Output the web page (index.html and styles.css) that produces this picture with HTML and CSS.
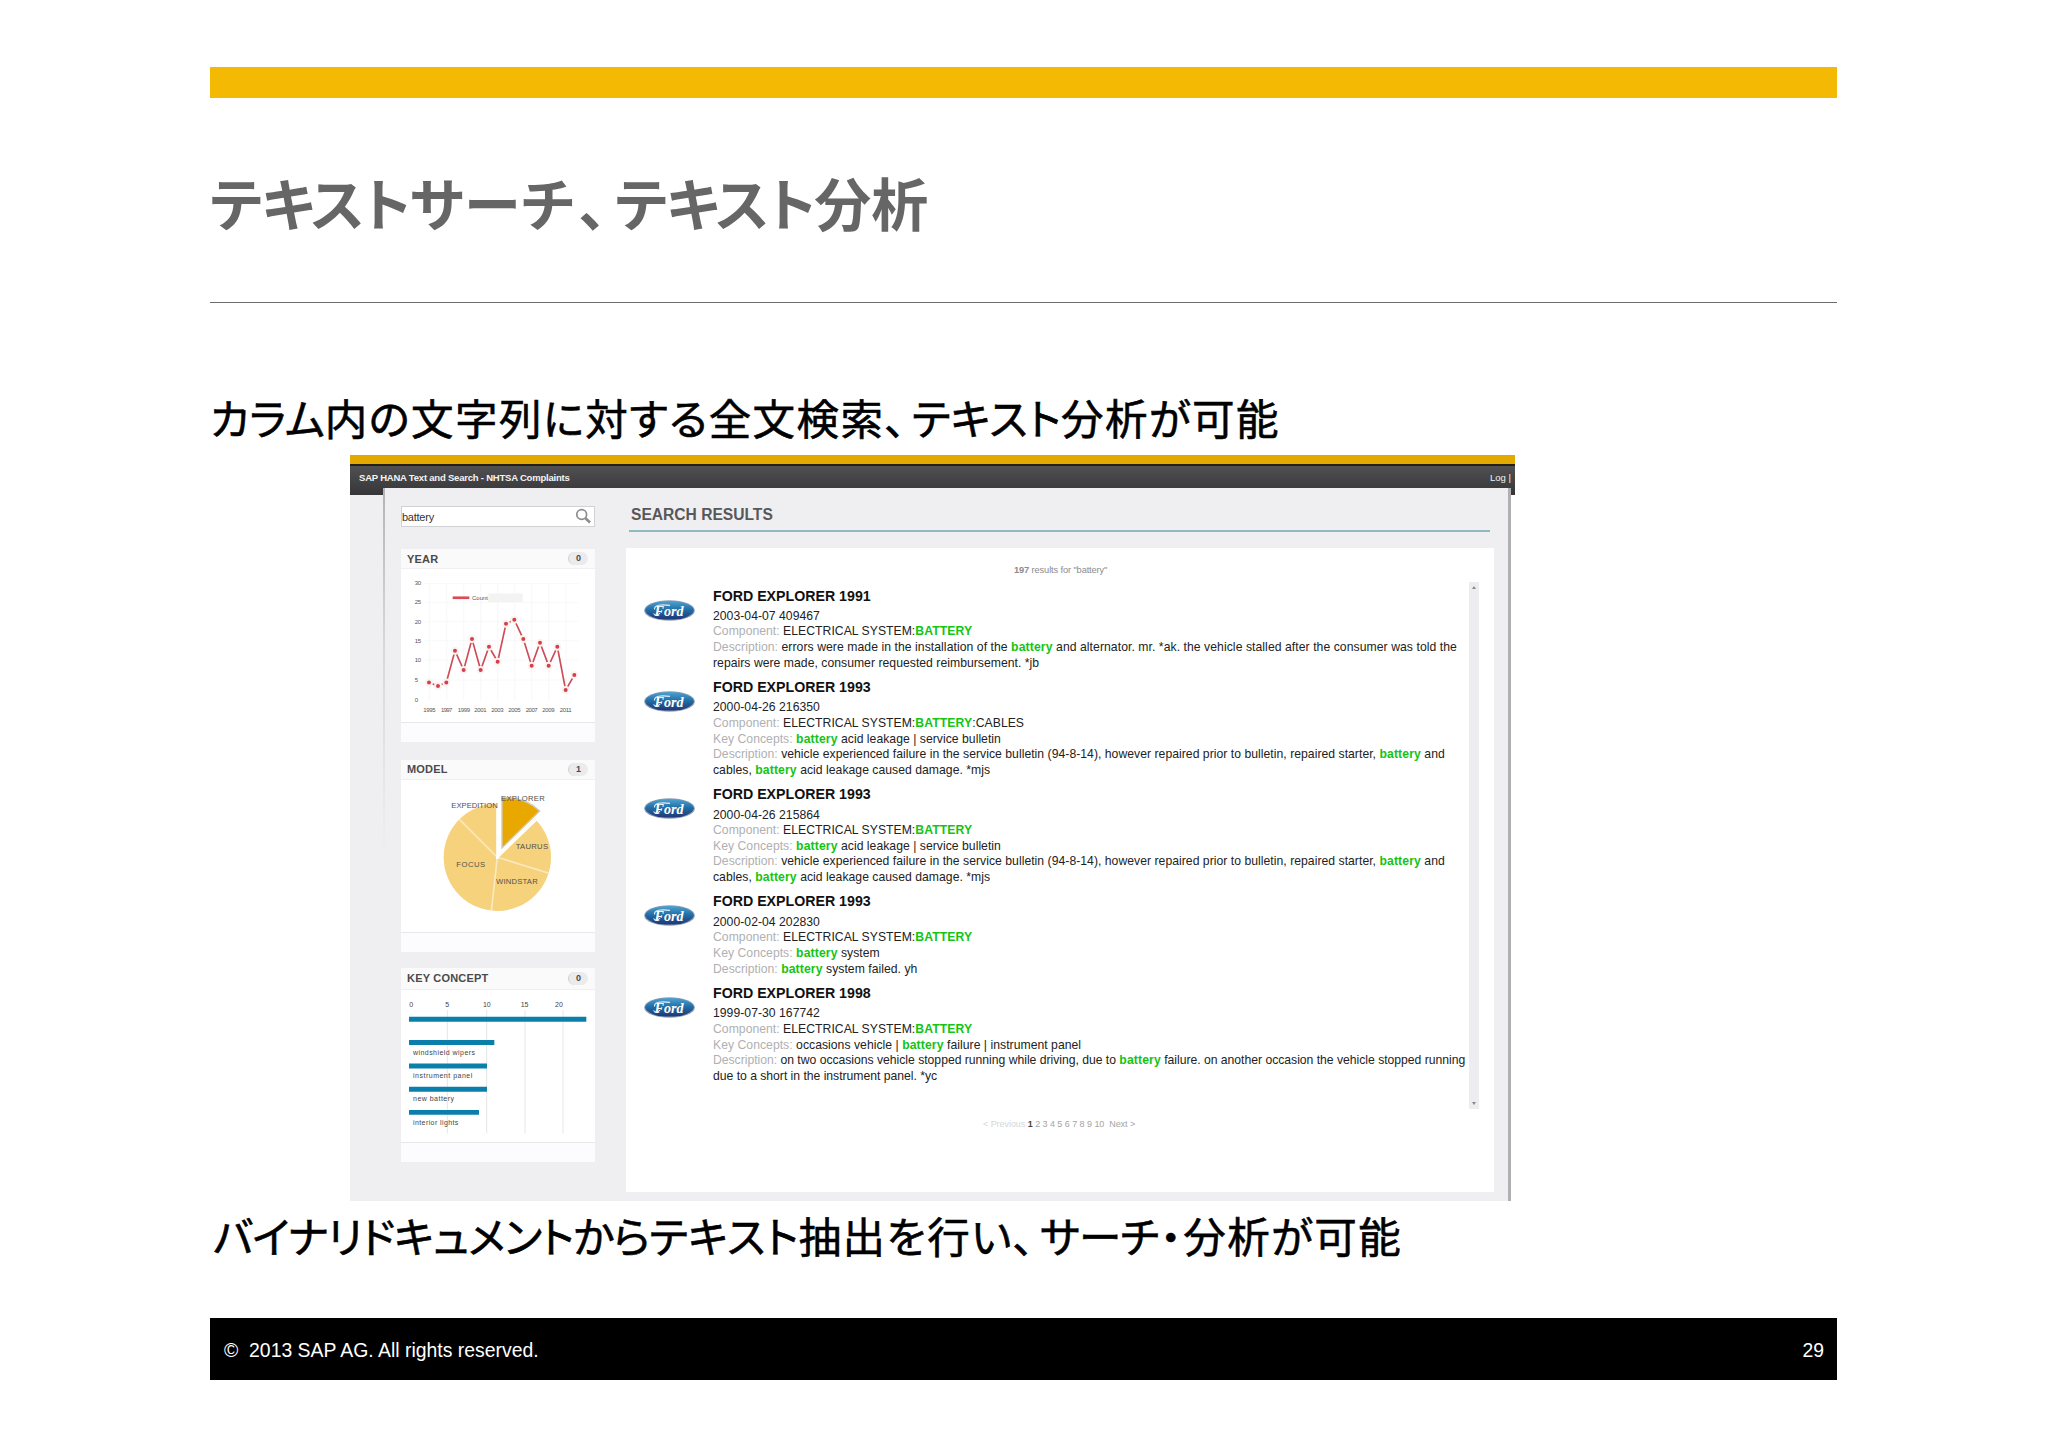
FILE: index.html
```html
<!DOCTYPE html>
<html lang="ja">
<head>
<meta charset="utf-8">
<title>テキストサーチ、テキスト分析</title>
<link rel="stylesheet" href="styles.css">
</head>
<body>
<svg class="defs" width="0" height="0" aria-hidden="true">
  <defs>
    <linearGradient id="fordBlue" x1="0" y1="0" x2="0" y2="1">
      <stop offset="0" stop-color="#4fa3cf"/><stop offset=".45" stop-color="#2270a9"/><stop offset="1" stop-color="#1f3573"/>
    </linearGradient>
    <symbol id="ford" viewBox="0 0 51 21">
      <ellipse cx="25.5" cy="10.5" rx="25.3" ry="10.3" fill="#8d9db8"/>
      <ellipse cx="25.5" cy="10.3" rx="24.3" ry="9.3" fill="url(#fordBlue)"/>
      <text x="25" y="15.500" text-anchor="middle" class="ford-word" textLength="29" lengthAdjust="spacingAndGlyphs">Ford</text>
      <path d="M10.500 9.500C10 5 17 4 26 5.400M9.500 13.500c2 2.500 5 1.500 6.500-.5" fill="none" stroke="#e4eef6" stroke-width="1.200"/>
    </symbol>
  </defs>
</svg>
<main class="slide">
  <div class="accent"></div>
  <h1 class="title"><span class="t-kana">テキスト</span><span class="t-wide">サーチ</span><span class="t-comma">、</span><span class="t-kana">テキスト</span>分析</h1>
  <p class="lead"><span>カラム</span><span class="wide">内の文字列に対する全文検索</span><span class="comma">、</span><span class="kana">テキスト</span><span class="wide">分析が可能</span></p>

  <section class="shot">
    <header class="topbar"><b>SAP HANA Text and Search - NHTSA Complaints</b><span>Log |</span></header>
    <div class="panel">
      <aside class="side">
        <div class="search"><span>battery</span>
          <svg width="17" height="17" viewBox="0 0 17 17"><circle cx="7.700" cy="6.500" r="4.900" fill="none" stroke="#8d8d8f" stroke-width="1.700"/><path d="M11.500 10.300L16 14.500" stroke="#8d8d8f" stroke-width="2.600"/></svg>
        </div>
        <article class="card year">
          <h2>YEAR<i>0</i></h2>
          <svg class="chart" viewBox="183 387 579 457">
            <g stroke="#f4f4f6" stroke-width="2"><path d="M255 430H715M255 487H715M255 545H715M255 602H715M255 660H715M255 720H715M268 430V780M320 430V780M371 430V780M422 430V780M473 430V780M524 430V780M575 430V780M626 430V780M678 430V780"/></g>
            <path d="M445 460H548V486H445z" fill="#f3f3f4"/>
            <path d="M338 473H388" stroke="#dc4a55" stroke-width="8"/>
            <g class="tick"><text x="396" y="480" textLength="48">Count</text>
            <text x="224" y="435" textLength="19">30</text><text x="224" y="492" textLength="19">25</text><text x="224" y="551" textLength="19">20</text><text x="224" y="608" textLength="19">15</text><text x="224" y="666" textLength="19">10</text><text x="224" y="727">5</text><text x="224" y="785">0</text>
            <text x="250" y="816" textLength="37">1995</text><text x="303" y="816" textLength="34">1997</text><text x="353" y="816" textLength="37">1999</text><text x="403" y="816" textLength="37">2001</text><text x="454" y="816" textLength="37">2003</text><text x="505" y="816" textLength="37">2005</text><text x="557" y="816" textLength="36">2007</text><text x="607" y="816" textLength="37">2009</text><text x="659" y="816" textLength="36">2011</text></g>
            <polyline points="267,727 294,738 319,727 345,632 371,690 396,597 422,690 447,620 473,665 498,551 523,539 550,597 575,677 600,608 626,677 652,620 677,750 703,705" fill="none" stroke="#cf4b58" stroke-width="5"/>
            <g fill="#d43f4e" stroke="#fbf3ef" stroke-width="6"><circle cx="267" cy="727" r="9"/><circle cx="294" cy="738" r="9"/><circle cx="319" cy="727" r="9"/><circle cx="345" cy="632" r="9"/><circle cx="371" cy="690" r="9"/><circle cx="396" cy="597" r="9"/><circle cx="422" cy="690" r="9"/><circle cx="447" cy="620" r="9"/><circle cx="473" cy="665" r="9"/><circle cx="498" cy="551" r="9"/><circle cx="523" cy="539" r="9"/><circle cx="550" cy="597" r="9"/><circle cx="575" cy="677" r="9"/><circle cx="600" cy="608" r="9"/><circle cx="626" cy="677" r="9"/><circle cx="652" cy="620" r="9"/><circle cx="677" cy="750" r="9"/><circle cx="703" cy="705" r="9"/></g>
          </svg>
          <div class="foot"></div>
        </article>
        <article class="card model">
          <h2>MODEL<i>1</i></h2>
          <svg class="chart" viewBox="183 121 579 452">
            <circle cx="472" cy="350" r="161" fill="#f6d27c"/>
            <path d="M472 350V170H600V228z" fill="#fff"/>
            <path d="M472 350L590 232M472 350L627 398M472 350L454 511M472 350L358 236" stroke="#fbe9c0" stroke-width="5"/>
            <path d="M472 355V170M470 352L594 232" stroke="#fff" stroke-width="7"/>
            <path d="M486 322V172A150 150 0 0 1 599 211z" fill="#e9a800" stroke="#cdcbb5" stroke-width="4"/>
            <g class="pie-label"><text x="334" y="201" textLength="139">EXPEDITION</text><text x="483" y="181" textLength="131">EXPLORER</text><text x="527" y="324" textLength="97">TAURUS</text><text x="349" y="378" textLength="86">FOCUS</text><text x="468" y="431" textLength="125">WINDSTAR</text></g>
          </svg>
          <div class="foot"></div>
        </article>
        <article class="card concept">
          <h2>KEY CONCEPT<i>0</i></h2>
          <svg class="chart" viewBox="183 120 579 454">
            <path d="M322 180V550M440 180V550M555 180V550M669 180V550" stroke="#e6e6e8" stroke-width="3"/>
            <g fill="#0b7fab"><path d="M207 200H739V215H207z"/><path d="M207 270H463V285H207z"/><path d="M207 340H441V355H207z"/><path d="M207 410H441V425H207z"/><path d="M207 480H417V494H207z"/></g>
            <g class="bar-label"><text x="208" y="170">0</text><text x="316" y="170">5</text><text x="429" y="170" textLength="23">10</text><text x="542" y="170" textLength="23">15</text><text x="645" y="170" textLength="24">20</text>
            <text x="219" y="314" textLength="186">windshield wipers</text><text x="219" y="384" textLength="178">instrument panel</text><text x="219" y="454" textLength="123">new battery</text><text x="219" y="525" textLength="136">interior lights</text></g>
          </svg>
          <div class="foot"></div>
        </article>
      </aside>
      <section class="main">
        <h2 class="heading">SEARCH RESULTS</h2>
        <div class="results">
          <p class="count"><b>197</b> results for "battery"</p>
          <div class="scrollarea">
            <div class="list">
              <article class="item"><svg class="logo"><use href="#ford"/></svg><div>
                <h3>FORD EXPLORER 1991</h3>
                <p>2003-04-07 409467</p>
                <p><em>Component:</em> ELECTRICAL SYSTEM:<mark>BATTERY</mark></p>
                <p class="loose"><em>Description:</em> errors were made in the installation of the <mark>battery</mark> and alternator. mr. *ak. the vehicle stalled after the consumer was told the</p>
                <p>repairs were made, consumer requested reimbursement. *jb</p></div></article>
              <article class="item"><svg class="logo"><use href="#ford"/></svg><div>
                <h3>FORD EXPLORER 1993</h3>
                <p>2000-04-26 216350</p>
                <p><em>Component:</em> ELECTRICAL SYSTEM:<mark>BATTERY</mark>:CABLES</p>
                <p><em>Key Concepts:</em> <mark>battery</mark> acid leakage | service bulletin</p>
                <p><em>Description:</em> vehicle experienced failure in the service bulletin (94-8-14), however repaired prior to bulletin, repaired starter, <mark>battery</mark> and</p>
                <p>cables, <mark>battery</mark> acid leakage caused damage. *mjs</p></div></article>
              <article class="item"><svg class="logo"><use href="#ford"/></svg><div>
                <h3>FORD EXPLORER 1993</h3>
                <p>2000-04-26 215864</p>
                <p><em>Component:</em> ELECTRICAL SYSTEM:<mark>BATTERY</mark></p>
                <p><em>Key Concepts:</em> <mark>battery</mark> acid leakage | service bulletin</p>
                <p><em>Description:</em> vehicle experienced failure in the service bulletin (94-8-14), however repaired prior to bulletin, repaired starter, <mark>battery</mark> and</p>
                <p>cables, <mark>battery</mark> acid leakage caused damage. *mjs</p></div></article>
              <article class="item"><svg class="logo"><use href="#ford"/></svg><div>
                <h3>FORD EXPLORER 1993</h3>
                <p>2000-02-04 202830</p>
                <p><em>Component:</em> ELECTRICAL SYSTEM:<mark>BATTERY</mark></p>
                <p><em>Key Concepts:</em> <mark>battery</mark> system</p>
                <p><em>Description:</em> <mark>battery</mark> system failed. yh</p></div></article>
              <article class="item"><svg class="logo"><use href="#ford"/></svg><div>
                <h3>FORD EXPLORER 1998</h3>
                <p>1999-07-30 167742</p>
                <p><em>Component:</em> ELECTRICAL SYSTEM:<mark>BATTERY</mark></p>
                <p><em>Key Concepts:</em> occasions vehicle | <mark>battery</mark> failure | instrument panel</p>
                <p class="tight"><em>Description:</em> on two occasions vehicle stopped running while driving, due to <mark>battery</mark> failure. on another occasion the vehicle stopped running</p>
                <p class="tight">due to a short in the instrument panel. *yc</p></div></article>
            </div>
            <div class="scrollbar"><span class="up"></span><span class="down"></span></div>
          </div>
          <p class="pager"><span>&lt; Previous</span> <b>1</b> 2 3 4 5 6 7 8 9 10 &nbsp;Next &gt;</p>
        </div>
      </section>
    </div>
  </section>

  <p class="lead last"><span class="narrow">バイナリドキュメントから</span><span class="kana">テキスト</span><span class="wide">抽出を行い</span><span class="comma">、</span><span class="narrow">サーチ</span><span class="dot">・</span><span class="wide">分析が可能</span></p>
  <footer class="footer"><span>©&nbsp; 2013 SAP AG. All rights reserved.</span><span>29</span></footer>
</main>
</body>
</html>
```
FILE: styles.css
```css
* { box-sizing: border-box; }
body { margin: 0; background: #fff; color: #000; font-family: "Liberation Sans", Arial, sans-serif; }
h1, h2, h3, p { margin: 0; font-weight: normal; white-space: nowrap; }
.defs { display: block; height: 0; }
.slide { width: 1627px; margin: 0 0 0 210px; padding-top: 67px; display: flex; flex-direction: column; }
.accent { height: 31px; background: #f4b902; }
.title { height: 205px; padding-top: 63px; border-bottom: 1px solid #6c6c6c; font: 700 57px/80px "Noto Sans CJK JP", sans-serif; font-feature-settings: "palt"; color: #666; }
.t-kana { letter-spacing: -1.300px; }
.t-wide { letter-spacing: 1px; }
.t-comma { margin: 0 8px 0 3px; }
.lead { margin-top: 87px; height: 54px; font: 400 42.500px/54px "Noto Sans CJK JP", sans-serif; font-feature-settings: "palt"; -webkit-text-stroke: .600px #000; }
.wide { letter-spacing: 1.450px; }
.kana { letter-spacing: .300px; }
.narrow { letter-spacing: -.900px; }
.comma { margin-right: 6px; }
.dot { margin: 0 2px; }
.lead.last { margin-top: 7px; padding-left: 3px; }

.shot { margin: 11px 0 0 140px; width: 1165px; height: 746px; border-top: 9px solid #e3a900; background: linear-gradient(90deg, #efeff1 1150px, #fff 1150px); }
.topbar { height: 31px; padding: 0 4px 6px 9px; display: flex; justify-content: space-between; align-items: center; border-top: 2px solid #241f10; background: linear-gradient(#505052, #363638); color: #f4f4f4; font-size: 9.500px; }
.topbar b { letter-spacing: -.210px; }
.panel { position: relative; margin: -7px 0 0 35px; width: 1126px; height: 713px; padding: 18px 17px 0 16px; display: flex; gap: 31px; background: #efeff1; border-right: 3px solid #b0b0b2; }
.panel::before { content: ""; position: absolute; left: -2px; top: 0; width: 2px; height: 370px; background: linear-gradient(#b4b4b8, #d6d6d9 40%, #efeff1); }

.side { width: 194px; flex: none; }
.search { height: 21px; padding: 0 3px 0 0; display: flex; justify-content: space-between; align-items: center; background: #fff; border: 1px solid #d2d2d4; font-size: 11px; letter-spacing: -.250px; color: #333; }
.card { height: 192.500px; margin-top: 18px; display: flex; flex-direction: column; background: #fff; }
.card.year { margin-top: 22px; }
.card.concept { margin-top: 15.500px; height: 194px; }
.card h2 { height: 20px; flex: none; padding: 0 7px 0 6px; display: flex; justify-content: space-between; align-items: center; background: #fafafb; border-bottom: 1px solid #f0f0f2; font-size: 11px; font-weight: bold; letter-spacing: .200px; color: #4a4a4c; }
.card.concept h2 { height: 22.500px; }
.card h2 i { width: 20px; height: 13px; border-radius: 7px; background: #ebebed; border-left: 1px solid #cfcfd2; font: 700 9px/13px "Liberation Sans", sans-serif; text-align: center; }
.chart { display: block; width: 193px; flex: 1; min-height: 0; }
.foot { height: 20px; flex: none; background: #fcfbfd; border-top: 1px solid #e8e8ea; }
.tick { font-size: 18px; fill: #555; }
.pie-label { font-size: 23px; fill: #55504a; }
.bar-label { font-size: 21px; fill: #444; }

.main { flex: 1; }
.heading { margin: 0 0 0 3px; width: 861px; height: 26px; padding-left: 2px; font-size: 15.600px; font-weight: bold; line-height: 17px; color: #58585a; border-bottom: 2px solid #8fb9c3; }
.results { margin-top: 16px; width: 868px; height: 644px; background: #fff; }
.count { padding-top: 14px; height: 34px; margin-left: 388px; font-size: 9.300px; letter-spacing: -.130px; line-height: 16px; color: #8c8c8e; }
.scrollarea { display: flex; justify-content: space-between; height: 527px; padding-right: 15px; }
.list { padding: 4.600px 0 0 18px; }
.item { display: flex; gap: 18px; margin-bottom: 6.900px; }
.logo { width: 51px; height: 21px; margin-top: 13px; flex: none; }
.ford-word { font: italic 700 15px "Liberation Serif", serif; fill: #fff; }
.item h3 { margin-bottom: 2.800px; font-size: 14.200px; font-weight: bold; line-height: 19.500px; color: #111; }
.item p { font-size: 12.200px; letter-spacing: .030px; line-height: 15.600px; color: #222; }
.item p.loose { letter-spacing: .060px; }
.item p.tight { letter-spacing: -.020px; }
.item em { font-style: normal; color: #b0b0b2; }
.item mark { background: none; color: #13c413; font-weight: bold; letter-spacing: .120px; }
.scrollbar { width: 10px; background: #ededef; display: flex; flex-direction: column; justify-content: space-between; align-items: center; padding: 4px 0; }
.up, .down { border: 2px solid transparent; }
.up { border-top: 0; border-bottom: 3px solid #8a8a8c; }
.down { border-bottom: 0; border-top: 3px solid #8a8a8c; }
.pager { margin: 7px 0 0 357px; font-size: 9px; letter-spacing: -.050px; line-height: 16px; color: #a4a4a6; }
.pager span { color: #d6d6d8; }
.pager b { color: #444; }

.footer { margin-top: 56px; height: 62px; padding: 3px 13px 0 14px; display: flex; justify-content: space-between; align-items: center; background: #000; color: #fff; font-size: 19.400px; }
```
